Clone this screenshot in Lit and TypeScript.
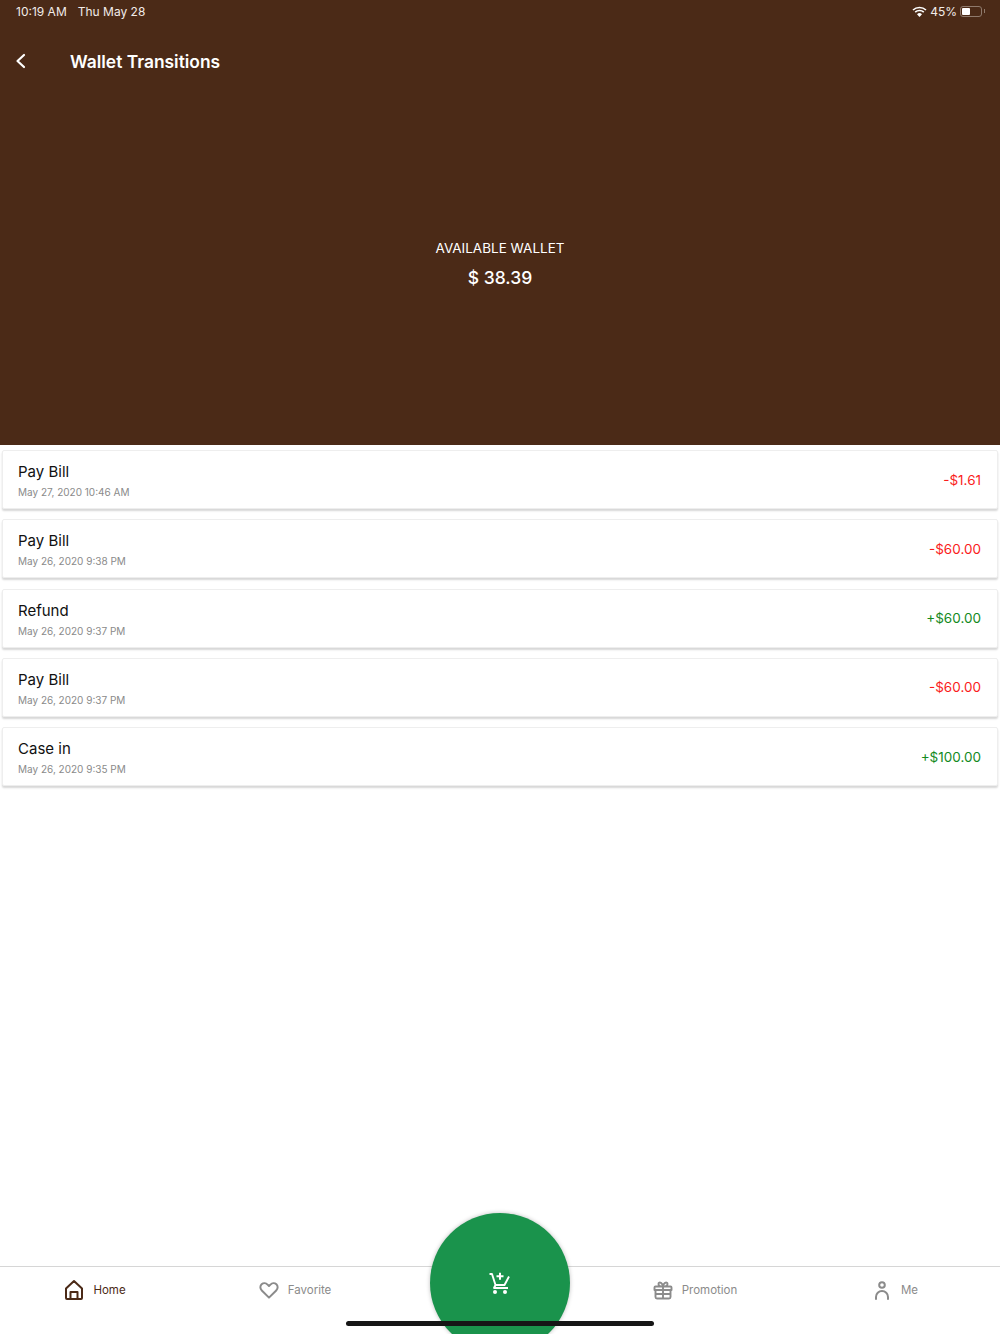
import { LitElement, html, css, svg } from 'lit';
import { customElement } from 'lit/decorators.js';

const transactions = [
  { title: 'Pay Bill', date: 'May 27, 2020 10:46 AM', amount: '-$1.61', credit: false },
  { title: 'Pay Bill', date: 'May 26, 2020 9:38 PM', amount: '-$60.00', credit: false },
  { title: 'Refund', date: 'May 26, 2020 9:37 PM', amount: '+$60.00', credit: true },
  { title: 'Pay Bill', date: 'May 26, 2020 9:37 PM', amount: '-$60.00', credit: false },
  { title: 'Case in', date: 'May 26, 2020 9:35 PM', amount: '+$100.00', credit: true },
];

const homeIcon = svg`<path d="M11 2 3 9.500V19a1 1 0 0 0 1 1h14a1 1 0 0 0 1-1V9.500ZM7.500 20v-7h7v7" fill="none" stroke="currentColor" stroke-width="2" stroke-linejoin="round"/>`;
const heartIcon = svg`<path transform="translate(1.100 1.100) scale(0.9)" d="M11 19.500 3 11.600C.8 9.400 1 6.400 2.800 4.700c2-1.800 4.800-1.500 6.600.3L11 6.600l1.600-1.600c1.800-1.800 4.600-2.100 6.600-.3 1.800 1.700 2 4.700-.2 6.900Z" fill="none" stroke="currentColor" stroke-width="2.200" stroke-linejoin="round"/>`;
const giftIcon = svg`<path d="M3.500 7.500h15a1 1 0 0 1 1 1V11h-17V8.500a1 1 0 0 1 1-1ZM3.500 11v7a1.500 1.500 0 0 0 1.500 1.500h12a1.500 1.500 0 0 0 1.500-1.500v-7M11 7.500v12M11 7.500C9 7.500 6.500 7 6.500 5 6.500 3 10 2.500 11 7.500ZM11 7.500c2 0 4.500-.5 4.500-2.500 0-2-3.500-2.500-4.500 2.500ZM3.500 15h15" fill="none" stroke="currentColor" stroke-width="1.900" stroke-linejoin="round"/>`;
const personIcon = svg`<circle cx="11" cy="6" r="2.800" fill="none" stroke="currentColor" stroke-width="2"/><path d="M5 20v-2a6 6 0 0 1 12 0v2" fill="none" stroke="currentColor" stroke-width="2" stroke-linecap="round"/>`;

@customElement('app-root')
export class AppRoot extends LitElement {
  static styles = css`
    :host {
      display: flex;
      flex-direction: column;
      height: 1334px;
      background: #fff;
      font-family: Inter, 'Noto Sans', sans-serif;
      overflow: hidden;
    }
    .hero {
      height: 445px;
      flex: none;
      background: #4b2a17;
      color: #fff;
      display: flex;
      flex-direction: column;
    }
    .status {
      height: 23px;
      padding: 0 18px 0 16px;
      display: flex;
      align-items: center;
      justify-content: space-between;
      font-size: 12px;
      color: #f1ece9;
    }
    .status-left { display: flex; gap: 11px; }
    .status-right { display: flex; align-items: center; gap: 3px; }
    .battery {
      box-sizing: content-box;
      border: 1px solid #8f7a6c;
      border-radius: 3px;
      padding: 0 1px;
      width: 18px;
      height: 9px;
      display: flex;
      align-items: center;
      position: relative;
    }
    .battery::before {
      content: '';
      width: 8px;
      height: 7px;
      background: #fff;
      border-radius: 1px;
    }
    .battery::after {
      content: '';
      position: absolute;
      right: -4px;
      top: 2px;
      width: 1px;
      height: 4px;
      background: #8f7a6c;
    }
    .nav {
      height: 50px;
      margin-top: 14px;
      display: flex;
      align-items: center;
      padding-left: 14px;
    }
    .nav svg { width: 13px; height: 18px; flex: none; }
    .nav h1 {
      margin: 0 0 0 43px;
      font-size: 17.400px;
      font-weight: 600;
      line-height: 24px;
    }
    .balance {
      margin-top: 151px;
      display: flex;
      flex-direction: column;
      align-items: center;
    }
    .balance span { font-size: 13.500px; line-height: 20px; }
    .balance strong { margin-top: 8px; font-size: 17.500px; font-weight: 500; line-height: 24px; }
    .list {
      flex: 1;
      padding: 5px 2px 0;
      display: flex;
      flex-direction: column;
      gap: 10.250px;
    }
    .row {
      height: 59px;
      box-sizing: border-box;
      padding: 0 16px 0 15px;
      display: flex;
      align-items: center;
      justify-content: space-between;
      background: #fff;
      border: 1px solid #eeeeee;
      border-radius: 2px;
      box-shadow: 0 2px 2px rgba(0, 0, 0, 0.16);
    }
    .info { padding-top: 2px; }
    .row h2 {
      margin: 0;
      font-size: 15px;
      font-weight: 400;
      line-height: 20px;
      color: #111;
    }
    .row p {
      margin: 3px 0 0;
      font-size: 10px;
      line-height: 14px;
      color: #8a8a8a;
    }
    .amount { font-size: 13.500px; color: #fa1c1c; }
    .amount.credit { color: #138a1e; }
    .tabs {
      height: 68px;
      flex: none;
      box-sizing: border-box;
      border-top: 1px solid #d6d6d6;
      display: grid;
      grid-template-columns: 190px 210px 200px 190px 210px;
      position: relative;
      color: #8b8b8b;
    }
    .tab {
      display: flex;
      align-items: center;
      justify-content: center;
      gap: 8px;
      height: 46px;
      padding-right: 1px;
      font-size: 11.500px;
    }
    .tab svg { width: 22px; height: 22px; flex: none; }
    .tab.active { color: #4b2a17; }
    .fab {
      position: absolute;
      left: 430px;
      top: -54px;
      width: 140px;
      height: 140px;
      border-radius: 50%;
      background: #1a934c;
      box-shadow: 0 0 4px rgba(0, 0, 0, 0.25);
      display: flex;
      align-items: center;
      justify-content: center;
      color: #fff;
    }
    .fab svg { width: 21px; height: 22px; margin: 0 2px 1px 0; }
    .indicator {
      position: absolute;
      left: 346px;
      top: 54px;
      width: 308px;
      height: 5px;
      border-radius: 3px;
      background: #161616;
    }
  `;

  private tab(label: string, icon: unknown, active = false) {
    return html`
      <div class="tab ${active ? 'active' : ''}">
        <svg viewBox="0 0 22 22">${icon}</svg>
        <span>${label}</span>
      </div>
    `;
  }

  render() {
    return html`
      <section class="hero">
        <div class="status">
          <div class="status-left"><span>10:19 AM</span><span>Thu May 28</span></div>
          <div class="status-right">
            <svg width="15" height="11" viewBox="0 0 15 11">
              <path d="M1 4a9.500 9.500 0 0 1 13 0M3.200 6.200a6.300 6.300 0 0 1 8.600 0" fill="none" stroke="#fff" stroke-width="1.600"/>
              <path d="M5 8.200a3.500 3.500 0 0 1 5 0L7.500 11Z" fill="#fff"/>
            </svg>
            <span>45%</span>
            <div class="battery"></div>
          </div>
        </div>
        <div class="nav">
          <svg viewBox="0 0 13 18">
            <path d="M10 2 3.500 8l6.500 6" fill="none" stroke="#fff" stroke-width="2.200" stroke-linecap="round" stroke-linejoin="round"/>
          </svg>
          <h1>Wallet Transitions</h1>
        </div>
        <div class="balance">
          <span>AVAILABLE WALLET</span>
          <strong>$ 38.39</strong>
        </div>
      </section>
      <section class="list">
        ${transactions.map(
          (t) => html`
            <div class="row">
              <div class="info">
                <h2>${t.title}</h2>
                <p>${t.date}</p>
              </div>
              <div class="amount ${t.credit ? 'credit' : ''}">${t.amount}</div>
            </div>
          `
        )}
      </section>
      <nav class="tabs">
        ${this.tab('Home', homeIcon, true)}
        ${this.tab('Favorite', heartIcon)}
        <div></div>
        ${this.tab('Promotion', giftIcon)}
        ${this.tab('Me', personIcon)}
        <div class="fab">
          <svg viewBox="0 0 21 22">
            <path d="M.500 2H3l3.500 11L5 16h14M20 4.500 15.500 13h-9" fill="none" stroke="currentColor" stroke-width="1.900" stroke-linejoin="round"/>
            <path d="M11 .8v7M7.500 4.300h7" fill="none" stroke="currentColor" stroke-width="2"/>
            <circle cx="6" cy="20" r="2" fill="currentColor"/>
            <circle cx="16" cy="20" r="2" fill="currentColor"/>
          </svg>
        </div>
        <div class="indicator"></div>
      </nav>
    `;
  }
}
